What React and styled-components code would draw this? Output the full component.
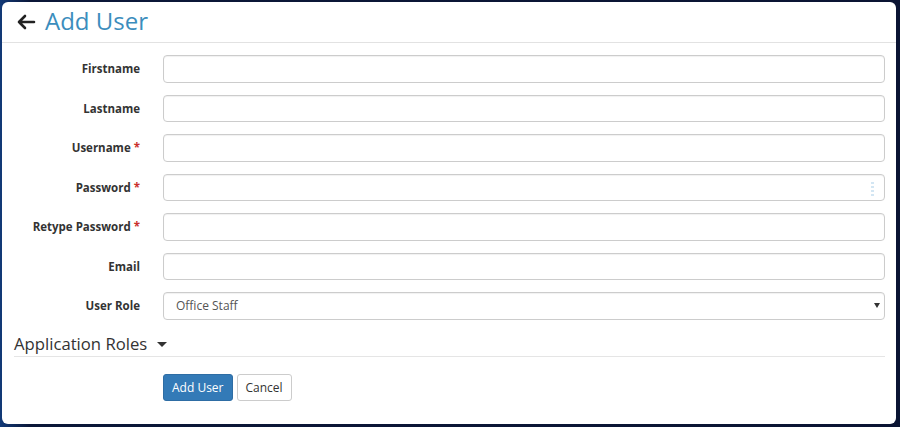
import React from "react";
import styled, { createGlobalStyle } from "styled-components";

const Global = createGlobalStyle`
  html, body { margin: 0; padding: 0; }
  body {
    background: linear-gradient(90deg, #123a78 0px, #0b1738 30px, #0a1433 100%);
    font-family: "Open Sans", "Liberation Sans", sans-serif;
    color: #333;
    height: 427px;
    overflow: hidden;
  }
`;

const Modal = styled.div`
  margin: 2px 4px 0 2px;
  width: 894px;
  height: 422px;
  background: #fff;
  border-radius: 6px;
  box-sizing: border-box;
  display: flex;
  flex-direction: column;
`;

const Header = styled.div`
  height: 40px;
  border-bottom: 1px solid #e2e2e2;
  display: flex;
  align-items: center;
  padding-left: 14px;
  gap: 9px;
`;

const Title = styled.h1`
  margin: 0;
  font-size: 24px;
  font-weight: 400;
  color: #3b8dbd;
  line-height: 1;
  position: relative;
  top: -1px;
`;

const Body = styled.div`
  padding: 12px 11px 0 10px;
  display: flex;
  flex-direction: column;
`;

const Row = styled.div`
  display: grid;
  grid-template-columns: 128px 1fr;
  column-gap: 23px;
  align-items: center;
  margin-bottom: 12px;
`;

const Label = styled.label`
  text-align: right;
  font-size: 11.5px;
  font-weight: 700;
  color: #333;
`;

const Req = styled.span`
  color: #c9302c;
  margin-left: 3px;
`;

const Field = styled.div`
  position: relative;
  height: 27.5px;
  border: 1px solid #ccc;
  border-radius: 4px;
  box-sizing: border-box;
  box-shadow: inset 0 1px 1px rgba(0,0,0,0.06);
  display: flex;
  align-items: center;
  padding: 0 12px;
  font-size: 12px;
  color: #555;
`;

const Dots = styled.span`
  position: absolute;
  right: 10px;
  top: 7px;
  display: flex;
  flex-direction: column;
  gap: 2px;
  & > i {
    display: block;
    width: 3px;
    height: 2px;
    background: #d3e6f3;
  }
`;

const Caret = styled.span`
  position: absolute;
  right: 4px;
  top: 10px;
  width: 0;
  height: 0;
  border-left: 3px solid transparent;
  border-right: 3px solid transparent;
  border-top: 5px solid #333;
`;

const Section = styled.div`
  margin-left: 2px;
  height: 24px;
  border-bottom: 1px solid #e5e5e5;
  display: flex;
  align-items: center;
  gap: 10px;
  font-size: 16.7px;
  color: #333;
`;

const SectionCaret = styled.span`
  width: 0;
  height: 0;
  border-left: 5px solid transparent;
  border-right: 5px solid transparent;
  border-top: 5px solid #333;
  margin-top: 2px;
`;

const Actions = styled.div`
  margin-top: 17px;
  padding-left: 151px;
  display: flex;
  gap: 4px;
`;

const Button = styled.button`
  height: 27px;
  padding: 0 8px;
  font-family: inherit;
  font-size: 12px;
  border-radius: 3px;
  border: 1px solid ${p => (p.$primary ? "#2e6da4" : "#ccc")};
  background: ${p => (p.$primary ? "#337ab7" : "#fff")};
  color: ${p => (p.$primary ? "#fff" : "#333")};
  cursor: pointer;
`;

const fields = [
  { label: "Firstname" },
  { label: "Lastname" },
  { label: "Username", req: true },
  { label: "Password", req: true, dots: true },
  { label: "Retype Password", req: true },
  { label: "Email" },
  { label: "User Role", value: "Office Staff", select: true },
];

export default function App() {
  return (
    <>
      <Global />
      <Modal>
        <Header>
          <svg width="20" height="16" viewBox="0 0 20 16">
            <path d="M18 8H3M9 2L3 8l6 6" fill="none" stroke="#222" strokeWidth="2.6" strokeLinecap="round" strokeLinejoin="round" />
          </svg>
          <Title>Add User</Title>
        </Header>
        <Body>
          {fields.map(f => (
            <Row key={f.label}>
              <Label>
                {f.label}
                {f.req && <Req>*</Req>}
              </Label>
              <Field>
                {f.value}
                {f.dots && (
                  <Dots>
                    <i /><i /><i /><i />
                  </Dots>
                )}
                {f.select && <Caret />}
              </Field>
            </Row>
          ))}
          <Section>
            Application Roles
            <SectionCaret />
          </Section>
          <Actions>
            <Button $primary>Add User</Button>
            <Button>Cancel</Button>
          </Actions>
        </Body>
      </Modal>
    </>
  );
}
